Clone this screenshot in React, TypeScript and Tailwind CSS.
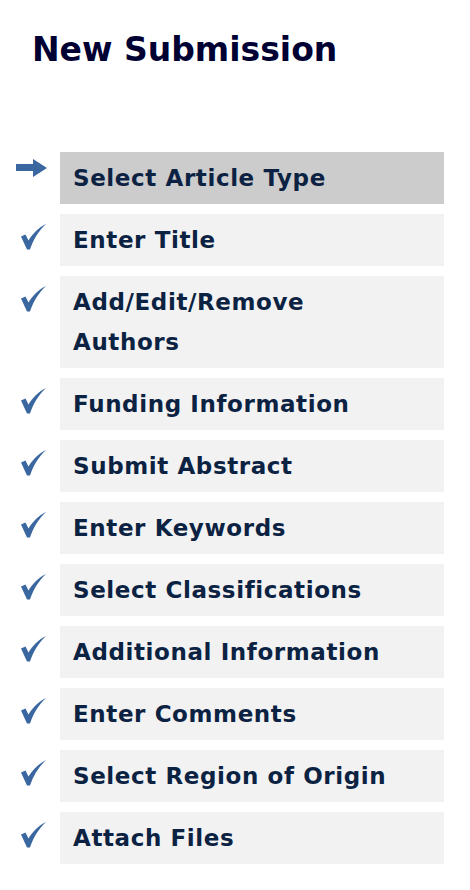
import React from 'react';

const steps = [
  'Select Article Type',
  'Enter Title',
  'Add/Edit/Remove Authors',
  'Funding Information',
  'Submit Abstract',
  'Enter Keywords',
  'Select Classifications',
  'Additional Information',
  'Enter Comments',
  'Select Region of Origin',
  'Attach Files',
];

const Arrow = () => (
  <svg width="31" height="18" viewBox="0 0 31 18" className="text-[#3a67a0]">
    <path d="M0 5h17V0l14 9-14 9v-6H0z" fill="currentColor" />
  </svg>
);

const Check = () => (
  <svg width="26" height="26" viewBox="0 0 26 26" className="text-[#3a67a0]">
    <path
      d="M0 12.5L4.5 10.5L7.5 16.5C11.5 10 17 4 25 0C18 6.5 12.5 15 9 25.5L6 25.5Z"
      fill="currentColor"
    />
  </svg>
);

export default function App() {
  return (
    <div className="min-h-screen bg-white font-['DejaVu_Sans',Verdana,sans-serif]">
      <h1 className="pl-[32px] pt-[30px] text-[33px] leading-[40px] font-bold text-[#000033]">
        New Submission
      </h1>
      <ul className="mt-[82px] flex flex-col gap-[10px] pr-[26px]">
        {steps.map((step, i) => (
          <li key={step} className="flex items-start">
            <div className={`w-[60px] shrink-0 ${i === 0 ? 'pl-[16px] pt-[7px]' : 'pl-[21px] pt-[10px]'}`}>
              {i === 0 ? <Arrow /> : <Check />}
            </div>
            <div
              className={`flex-1 pl-[13px] pr-[40px] py-[6px] text-[23px] leading-[40px] tracking-[0.6px] font-bold text-[#0c2242] ${
                i === 0 ? 'bg-[#cccccc]' : 'bg-[#f2f2f2]'
              }`}
            >
              {step}
            </div>
          </li>
        ))}
      </ul>
    </div>
  );
}
